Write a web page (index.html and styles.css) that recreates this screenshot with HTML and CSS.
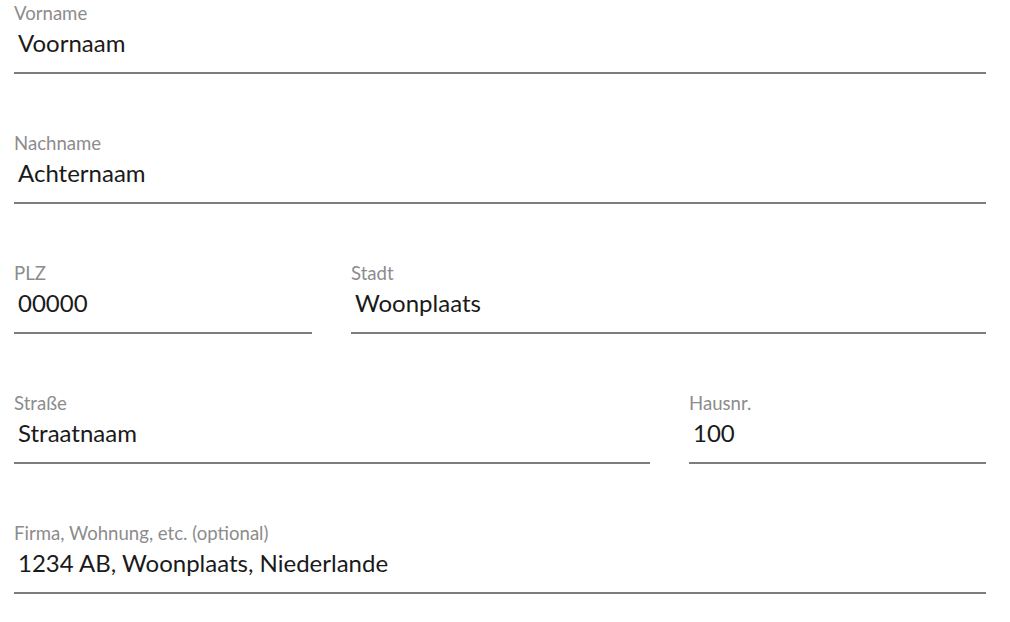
FILE: index.html
```html
<!DOCTYPE html>
<html lang="de">
<head>
    <meta charset="UTF-8">
    <title>Adresse</title>
    <link rel="stylesheet" href="styles.css">
</head>
<body>
    <form class="address-form">
        <div class="field">
            <label for="firstName">Vorname</label>
            <input type="text" id="firstName" value="Voornaam">
        </div>

        <div class="field">
            <label for="lastName">Nachname</label>
            <input type="text" id="lastName" value="Achternaam">
        </div>

        <div class="field-row zip-row">
            <div class="field">
                <label for="zip">PLZ</label>
                <input type="text" id="zip" value="00000">
            </div>
            <div class="field">
                <label for="city">Stadt</label>
                <input type="text" id="city" value="Woonplaats">
            </div>
        </div>

        <div class="field-row street-row">
            <div class="field">
                <label for="street">Straße</label>
                <input type="text" id="street" value="Straatnaam">
            </div>
            <div class="field">
                <label for="houseNo">Hausnr.</label>
                <input type="text" id="houseNo" value="100">
            </div>
        </div>

        <div class="field">
            <label for="extra">Firma, Wohnung, etc. (optional)</label>
            <input type="text" id="extra" value="1234 AB, Woonplaats, Niederlande">
        </div>
    </form>
</body>
</html>
```

FILE: styles.css
```css
body {
    margin: 0;
    background: #fff;
    font-family: Lato, "Open Sans", Arial, sans-serif;
}

.address-form {
    width: 972px;
    padding: 0 14px;
}

.field {
    margin-bottom: 56px;
}

.field label {
    display: block;
    font-size: 18.6px;
    line-height: 22px;
    color: #8c8c8c;
    padding-top: 2px;
}

.field input {
    display: block;
    width: 100%;
    box-sizing: border-box;
    border: none;
    border-bottom: 2px solid #7d7d7d;
    outline: none;
    padding: 3px 4px 13px;
    font-family: inherit;
    font-size: 24px;
    line-height: 32px;
    color: #1a1a1a;
    background: transparent;
}

.field-row {
    display: grid;
    column-gap: 39px;
}

.zip-row {
    grid-template-columns: 298px 1fr;
}

.street-row {
    grid-template-columns: 1fr 297px;
}
```
